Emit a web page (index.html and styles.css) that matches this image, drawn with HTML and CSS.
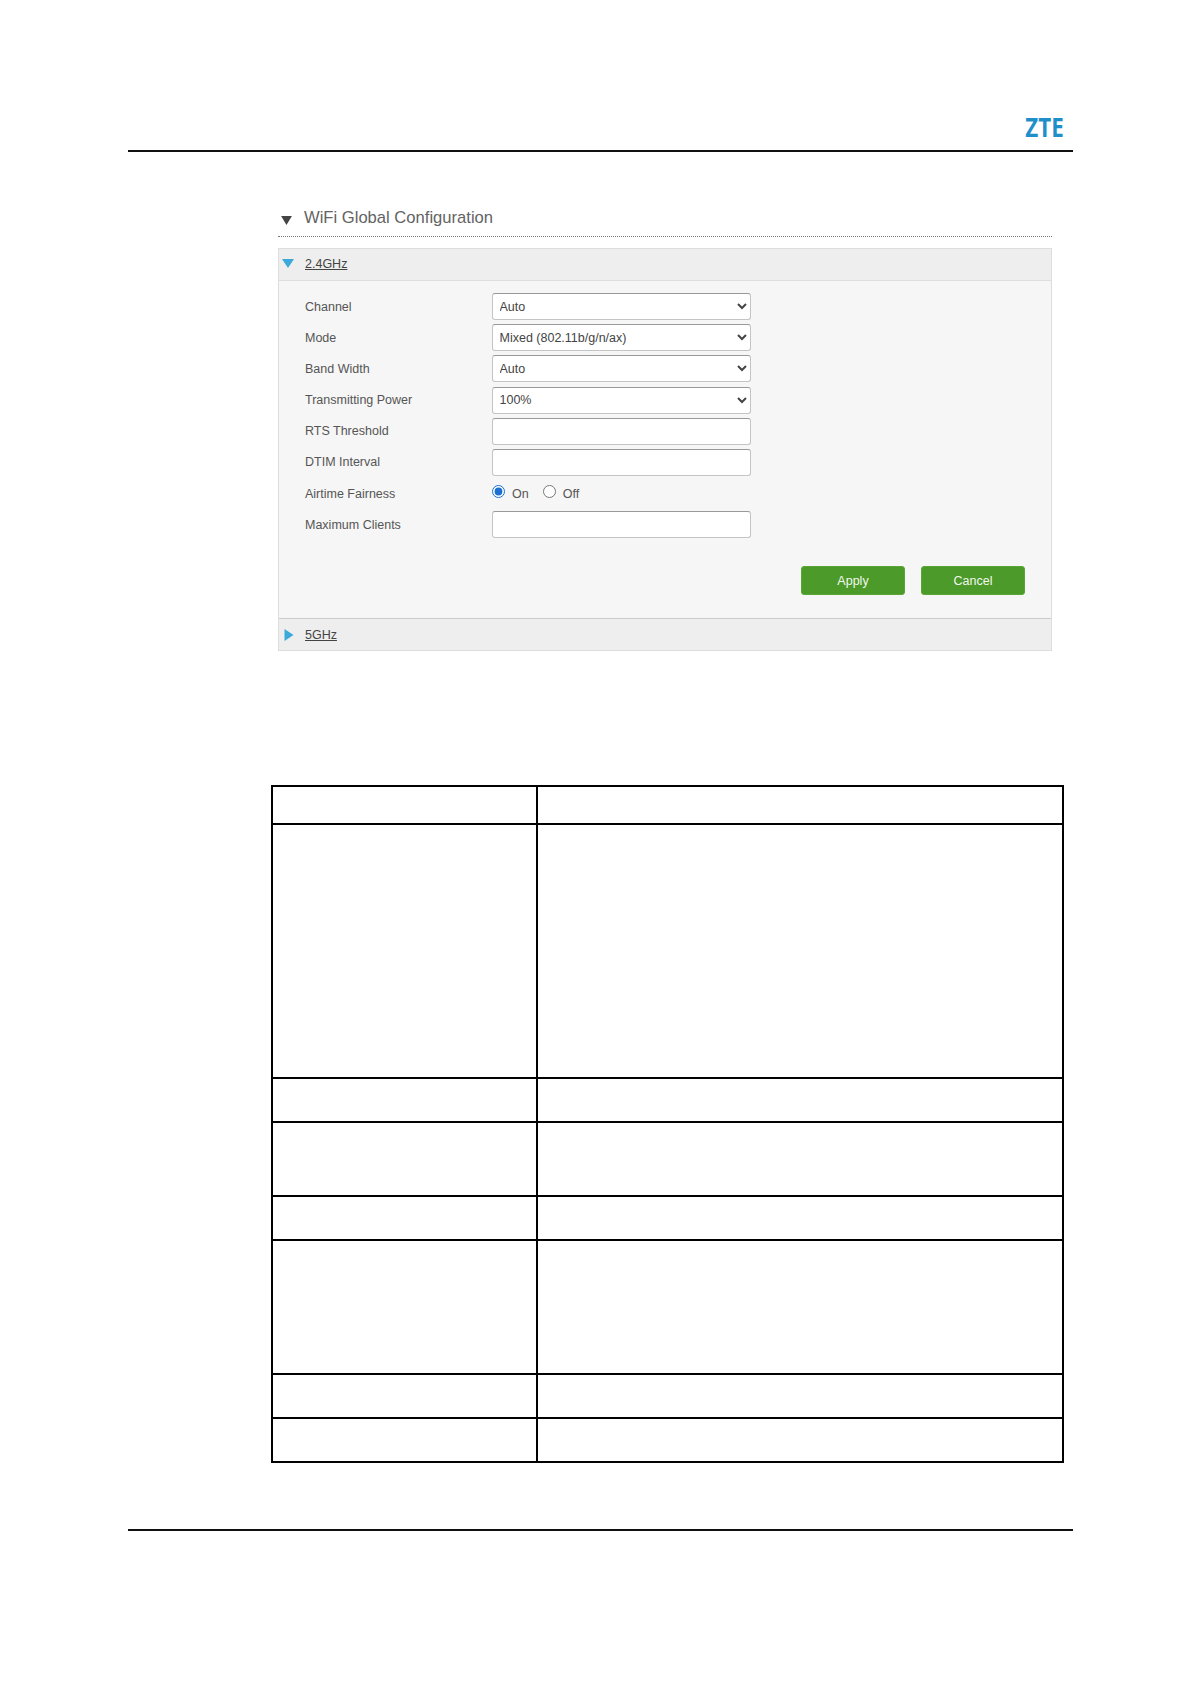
FILE: index.html
```html
<!DOCTYPE html>
<html lang="en">
<head>
<meta charset="utf-8">
<title>WiFi Global Configuration</title>
<link rel="stylesheet" href="styles.css">
</head>
<body>
<div class="page">
  <header class="doc-header"><span class="logo">ZTE</span></header>
  <section class="wifi">
    <h2 class="wifi-title"><svg class="tri-dark" viewBox="0 0 12 10"><path d="M0 0H12L6 10Z"/></svg>WiFi Global Configuration</h2>
    <div class="panel">
      <div class="panel-head">
        <svg class="tri-blue" viewBox="0 0 12 9"><path d="M0 0H12L6 9Z"/></svg><a class="band first">2.4GHz</a>
      </div>
      <div class="panel-body">
        <div class="row"><label class="lbl">Channel</label><select class="ctl"><option>Auto</option></select></div>
        <div class="row"><label class="lbl">Mode</label><select class="ctl"><option>Mixed (802.11b/g/n/ax)</option></select></div>
        <div class="row"><label class="lbl">Band Width</label><select class="ctl"><option>Auto</option></select></div>
        <div class="row"><label class="lbl">Transmitting Power</label><select class="ctl"><option>100%</option></select></div>
        <div class="row"><label class="lbl">RTS Threshold</label><input class="ctl txt" type="text"></div>
        <div class="row"><label class="lbl">DTIM Interval</label><input class="ctl txt" type="text"></div>
        <div class="row radios"><label class="lbl">Airtime Fairness</label>
          <input class="radio" type="radio" name="af" checked><span class="radio-text on">On</span>
          <input class="radio" type="radio" name="af"><span class="radio-text">Off</span>
        </div>
        <div class="row"><label class="lbl">Maximum Clients</label><input class="ctl txt" type="text"></div>
        <div class="actions"><button class="btn">Apply</button><button class="btn">Cancel</button></div>
      </div>
      <div class="panel-head last">
        <svg class="tri-blue side" viewBox="0 0 9 12"><path d="M0 0L9 6L0 12Z"/></svg><a class="band">5GHz</a>
      </div>
    </div>
  </section>
  <table class="params">
    <colgroup><col class="c1"><col class="c2"></colgroup>
    <tr class="r-head"><td></td><td></td></tr>
    <tr class="r-xl"><td></td><td></td></tr>
    <tr class="r-s"><td></td><td></td></tr>
    <tr class="r-m"><td></td><td></td></tr>
    <tr class="r-s"><td></td><td></td></tr>
    <tr class="r-l"><td></td><td></td></tr>
    <tr class="r-s"><td></td><td></td></tr>
    <tr class="r-s"><td></td><td></td></tr>
  </table>
  <footer class="doc-footer"></footer>
</div>
</body>
</html>
```
FILE: styles.css
```css
* { box-sizing: border-box; }
html, body { margin: 0; padding: 0; background: #fff; }
body { font-family: "Liberation Sans", Arial, sans-serif; color: #444; height: 1684px; overflow: hidden; }
.page { padding: 0 118px 0 128px; }
.doc-header { height: 152px; border-bottom: 2px solid #111; display: flex; justify-content: flex-end; align-items: flex-end; padding: 0 9px 10px 0; }
.logo { font-family: "Open Sans", "Liberation Sans", sans-serif; font-size: 26px; font-weight: 700; line-height: 26px; letter-spacing: 0; color: #1f8fca; transform: scaleX(.86); transform-origin: right center; }
.wifi { margin: 50px 0 0 150px; width: 774px; }
.wifi-title { margin: 0; height: 35px; border-bottom: 1px dotted #777; font-size: 16.6px; font-weight: 400; color: #636363; line-height: 20px; display: flex; align-items: flex-start; padding: 6px 0 0 3px; }
.tri-dark { width: 11px; height: 9px; fill: #444; margin: 8px 12px 0 0; }
.panel { margin-top: 11px; border: 1px solid #ddd; background: #f6f6f6; }
.panel-head { height: 32px; background: #eee; border-bottom: 1px solid #dedede; display: flex; align-items: center; padding-left: 3px; }
.panel-head.last { border-bottom: 0; border-top: 1px solid #ccc; height: 32px; }
.tri-blue { width: 12px; height: 9px; fill: #3ba9d9; margin: -3px 11px 0 0; }
.tri-blue.side { width: 10px; height: 12px; margin: 0 11px 0 2px; }
.band { font-size: 12.5px; color: #444; text-decoration: underline; }
.band.first { margin-top: -2px; }
.panel-body { padding: 12px 0 0 26px; height: 337px; }
.row { display: flex; align-items: center; height: 27px; margin-bottom: 4.2px; }
.lbl { width: 187px; font-size: 12.5px; color: #555; }
.ctl { width: 259px; height: 27px; font: 12.5px "Liberation Sans", Arial, sans-serif; color: #444; background: #fff; border: 1px solid #c4c4c4; border-top-color: #999; border-radius: 3px; padding: 0 2.5px; margin: 0; }
.txt { padding: 0 6px; }
.radio { margin: 0 7px 5px 0; width: 13px; height: 13px; accent-color: #1a6fd0; }
.radio-text { font-size: 12.5px; color: #555; }
.radio-text.on { margin-right: 14px; }
.actions { display: flex; justify-content: flex-end; gap: 16px; margin-top: 28px; padding-right: 26px; }
.btn { width: 104px; height: 29px; background: #4c9a2a; color: #f2f8ee; border: 1px solid #5aa634; border-radius: 3px; font: 12.5px "Liberation Sans", Arial, sans-serif; }
.params { margin: 134px 0 0 143px; width: 793px; border-collapse: collapse; table-layout: fixed; }
.params td { border: 2px solid #000; padding: 0; }
.c1 { width: 265px; }
.r-head { height: 38px; }
.r-xl { height: 254px; }
.r-s { height: 44px; }
.r-m { height: 74px; }
.r-l { height: 134px; }
.doc-footer { margin-top: 66px; height: 2px; background: #111; }
```
